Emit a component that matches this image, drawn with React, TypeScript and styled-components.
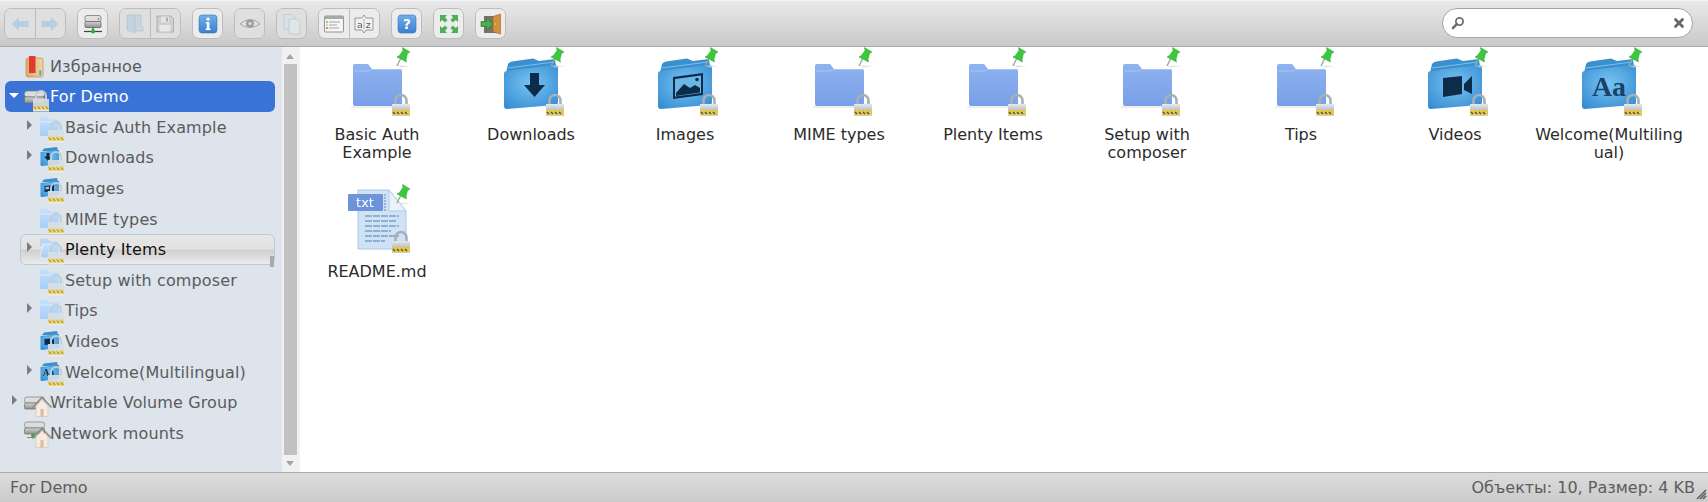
import React from "react";
import styled, { createGlobalStyle } from "styled-components";

const Global = createGlobalStyle`
  html, body { margin: 0; padding: 0; height: 100%; background: #fff; overflow: hidden; }
  #root { height: 100%; }
`;

const Shell = styled.div`
  display: flex;
  flex-direction: column;
  height: 502px;
  font-family: "DejaVu Sans", Verdana, sans-serif;
  font-size: 16px;
`;

const Toolbar = styled.div`
  box-sizing: border-box;
  height: 47px;
  flex: none;
  display: flex;
  align-items: flex-start;
  gap: 11px;
  padding: 7px 15px 0 4px;
  background: linear-gradient(#e9e9e9, #c9c9c9);
  border-top: 1px solid #f4f4f4;
  border-bottom: 1px solid #a9a9a9;
`;

const ButtonGroup = styled.div<{ $count: number }>`
  display: flex;
  width: ${(p) => p.$count * 31}px;
  height: 31px;
  box-sizing: border-box;
  border: 1px solid #bcbcbc;
  border-radius: 7px;
  overflow: hidden;
`;

const ToolButton = styled.div<{ $dim?: boolean }>`
  flex: 1;
  display: flex;
  align-items: center;
  justify-content: center;
  background: ${(p) => (p.$dim ? "#dfdfdf" : "#ececec")};
  & + & { border-left: 1px solid #bcbcbc; }
  svg { opacity: ${(p) => (p.$dim ? 0.42 : 1)}; filter: blur(0.4px); flex: none; }
`;

const Search = styled.div`
  margin-left: auto;
  box-sizing: border-box;
  width: 251px;
  height: 30px;
  background: #fff;
  border: 1px solid #a5a5a5;
  border-radius: 15px;
  display: flex;
  align-items: center;
  justify-content: space-between;
  padding: 0 7px;
  svg { filter: blur(0.3px); }
`;

const Main = styled.div`
  flex: 1;
  min-height: 0;
  display: flex;
`;

const Sidebar = styled.div`
  width: 282px;
  flex: none;
  box-sizing: border-box;
  padding-top: 3.4px;
  background: #dde4ec;
`;

const TreeRow = styled.div<{ $depth: number; $state?: "active" | "hover" }>`
  position: relative;
  box-sizing: border-box;
  height: 30.6px;
  margin: 0 7px 0 ${(p) => 5 + (p.$depth - 1) * 15}px;
  display: flex;
  align-items: center;
  border-radius: 6px;
  color: ${(p) => (p.$state === "active" ? "#fff" : p.$state === "hover" ? "#111" : "#5b5b5b")};
  background: ${(p) =>
    p.$state === "active"
      ? "#3a73d6"
      : p.$state === "hover"
        ? "linear-gradient(#e6e6e6 0%, #e2e2e2 48%, #cfcfcf 52%, #ebebeb 100%)"
        : "transparent"};
  border: ${(p) => (p.$state === "hover" ? "1px solid #b9cadb" : "none")};
  padding-left: ${(p) => (p.$state === "hover" ? 0 : 1)}px;
`;

const ArrowSlot = styled.div`
  width: 16px;
  flex: none;
  display: flex;
  justify-content: center;
`;

const RightTriangle = styled.div`
  width: 0;
  height: 0;
  margin-left: 1px;
  margin-top: -4px;
  border-left: 5px solid #7d7d7d;
  border-top: 5px solid transparent;
  border-bottom: 5px solid transparent;
`;

const DownTriangle = styled.div`
  width: 0;
  height: 0;
  margin-top: -1px;
  border-top: 5px solid #fff;
  border-left: 5px solid transparent;
  border-right: 5px solid transparent;
`;

const TreeIcon = styled.div`
  width: 28px;
  height: 30px;
  flex: none;
  svg { display: block; overflow: visible; filter: blur(0.35px); }
`;

const TreeLabel = styled.span`
  white-space: nowrap;
  margin-top: 1px;
  letter-spacing: 0.12px;
`;

const RowGrip = styled.div`
  position: absolute;
  right: 0;
  bottom: -3px;
  width: 4px;
  height: 11px;
  background: #a9a9a9;
`;

const ScrollTrack = styled.div`
  position: relative;
  width: 18px;
  flex: none;
  background: #f1f1f1;
`;

const ScrollThumb = styled.div`
  position: absolute;
  left: 2px;
  top: 17px;
  width: 13px;
  height: 391px;
  background: #c1c1c1;
`;

const ScrollArrow = styled.div<{ $down?: boolean }>`
  position: absolute;
  left: 4px;
  ${(p) => (p.$down ? "bottom: 6px;" : "top: 7px;")}
  width: 0;
  height: 0;
  border-left: 4px solid transparent;
  border-right: 4px solid transparent;
  ${(p) => (p.$down ? "border-top: 5px solid #a3a3a3;" : "border-bottom: 5px solid #a3a3a3;")}
`;

const Files = styled.div`
  flex: 1;
  min-width: 0;
  background: #fff;
  display: flex;
  flex-wrap: wrap;
  align-content: flex-start;
`;

const Tile = styled.div`
  width: 154px;
  height: 137px;
  display: flex;
  flex-direction: column;
  align-items: center;
  svg { display: block; flex: none; filter: blur(0.25px); }
`;

const TileLabel = styled.div`
  margin-top: 9px;
  width: 150px;
  text-align: center;
  line-height: 18px;
  color: #2b2b2b;
  overflow-wrap: anywhere;
`;

const StatusBar = styled.div`
  position: relative;
  box-sizing: border-box;
  height: 30px;
  flex: none;
  display: flex;
  align-items: center;
  justify-content: space-between;
  padding: 0 13px 0 10px;
  color: #5d5d5d;
  background: linear-gradient(#dcdcdc, #cbcbcb);
  border-top: 1px solid #a9a9a9;
`;

const Resizer = styled.div`
  position: absolute;
  right: 1px;
  bottom: 2px;
  svg { display: block; }
`;

const Defs = () => (
  <svg width="0" height="0" style={{ position: "absolute" }}>
    <defs>
      <linearGradient id="plain" x1="0" y1="0" x2="0" y2="1">
        <stop offset="0" stopColor="#8fb3ef" />
        <stop offset="1" stopColor="#789fe8" />
      </linearGradient>
      <radialGradient id="blue" cx="0.5" cy="0.42" r="0.7">
        <stop offset="0" stopColor="#79c3f2" />
        <stop offset="1" stopColor="#358dd2" />
      </radialGradient>
      <linearGradient id="silver" x1="0" y1="0" x2="0" y2="1">
        <stop offset="0" stopColor="#e6eaec" />
        <stop offset="1" stopColor="#b5bbbf" />
      </linearGradient>
      <linearGradient id="pale" x1="0" y1="0" x2="0" y2="1">
        <stop offset="0" stopColor="#c6e0fb" />
        <stop offset="1" stopColor="#a6cef6" />
      </linearGradient>
      <linearGradient id="btnblue" x1="0" y1="0" x2="0" y2="1">
        <stop offset="0" stopColor="#75aee8" />
        <stop offset="1" stopColor="#3b7fd3" />
      </linearGradient>
      <linearGradient id="drive" x1="0" y1="0" x2="0" y2="1">
        <stop offset="0" stopColor="#d5d5d5" />
        <stop offset="1" stopColor="#8f8f8f" />
      </linearGradient>
      <linearGradient id="fav" x1="0" y1="0" x2="1" y2="0">
        <stop offset="0" stopColor="#d9ad66" />
        <stop offset="1" stopColor="#f0d79f" />
      </linearGradient>
    </defs>
  </svg>
);

/* ---------- shared parts, in the 72×70 tile space ---------- */
const Lock = () => (
  <g>
    <path d="M54.5 58 V53.5 a5.5 5.5 0 0 1 11 0 V58" fill="none" stroke="#a9afb3" strokeWidth="2.6" />
    <rect x="51" y="57" width="18" height="7" fill="url(#silver)" />
    <rect x="51" y="63" width="18" height="5" fill="#e6c94a" />
    <path d="M52 65 l2 2 M56 65 l2 2 M60 65 l2 2 M64 65 l2 2" stroke="#5b5330" strokeWidth="1.4" />
    <rect x="51" y="68" width="18" height="1" fill="#cfcfcf" />
  </g>
);

const Pin = () => (
  <g transform="translate(-1.5 0)">
    <path d="M57 18.5 L72 19 L62 20.5Z" fill="#d8d8d8" opacity="0.7" />
    <path d="M57.5 19 L61 12" stroke="#8fb08f" strokeWidth="1.4" />
    <path d="M63 0.5 L70.5 5 L68 6.5 L66.5 12.5 L67 15 L57.5 10 L60 8.5 L63.5 3.5Z" fill="#3cc83c" stroke="#2ba12b" strokeWidth="0.5" />
  </g>
);

const PlainFolderShape = () => (
  <g>
    <path d="M14 17 H27 L31 22 H59 Q61 22 61 24 V57 Q61 59 59 59 H14 Q12 59 12 57 V19 Q12 17 14 17Z" fill="url(#plain)" />
    <path d="M13 24 H27 L31 22.5 H60.5" fill="none" stroke="#a9c4f3" strokeWidth="1" />
    <path d="M10 60 H63" stroke="#dcdcdc" strokeWidth="1" />
  </g>
);

const BlueFolderShape = () => (
  <g>
    <path d="M11 26 L13 17 Q14 15 17 14.5 L38 11.5 L44 14 L60 12 L61 20Z" fill="#3a8fcd" />
    <path d="M13 21 L59 15" stroke="#7fc0ec" strokeWidth="1" />
    <path d="M9 27 Q9 24 12 24 L26 22 L60 18 Q63 18 63 21 V55 Q63 58 60 58 L12 62 Q9 62 9 59Z" fill="url(#blue)" />
  </g>
);

type Glyph = "down" | "image" | "video" | "text";

const FolderGlyph = ({ kind }: { kind: Glyph }) => {
  if (kind === "down") return <path d="M35 26 H44 V38 H50 L39.5 50 L29 38 H35Z" fill="#0d2c4a" />;
  if (kind === "image")
    return (
      <g>
        <path d="M24 30 L54 26 V48 L24 52Z" fill="#0d2c4a" />
        <path d="M26 32 L52 28.5 V46 L26 49.5Z" fill="#6ab6e6" />
        <path d="M27 46 L35 37 L41 41 L46 38 L51 41 V45.5 L27 49Z" fill="#0d2c4a" />
        <circle cx="48" cy="32.5" r="1.8" fill="#0d2c4a" />
      </g>
    );
  if (kind === "video")
    return (
      <g>
        <path d="M24 31 L43 29 V47 L24 50Z" fill="#0d2c4a" />
        <path d="M45 37 L53 29 V47 L45 43Z" fill="#0d2c4a" />
      </g>
    );
  return (
    <text x="36" y="49" textAnchor="middle" fontFamily="'Liberation Serif', serif" fontWeight="700" fontSize="28" fill="#1a4467">
      Aa
    </text>
  );
};

const TileIcon = ({ kind }: { kind: "plain" | "file" | Glyph }) => (
  <svg width="72" height="70" viewBox="0 0 72 70" overflow="visible">
    {kind === "plain" && <PlainFolderShape />}
    {kind === "file" && (
      <g>
        <path d="M17 6 H48 L65 27 V65 H17Z" fill="#cfe2f6" stroke="#a9c6e4" strokeWidth="1" />
        <path d="M48 6 V27 H65Z" fill="#e9f2fb" stroke="#b4cde6" strokeWidth="1" />
        <path d="M24 32 H58 M24 37 H56 M24 42 H58 M24 47 H50 M24 52 H58 M24 57 H44" stroke="#7fa0c2" strokeWidth="1.3" strokeDasharray="7 1" />
        <rect x="7" y="10" width="35" height="17" rx="1" fill="#6d94da" />
        <path d="M44 10 V27" stroke="#9db3d3" strokeWidth="2" strokeDasharray="2 1" />
        <text x="24" y="23" textAnchor="middle" fontFamily="'DejaVu Sans', sans-serif" fontSize="13" fill="#fff">
          txt
        </text>
      </g>
    )}
    {kind !== "plain" && kind !== "file" && (
      <g>
        <BlueFolderShape />
        <FolderGlyph kind={kind} />
      </g>
    )}
    <Pin />
    <Lock />
  </svg>
);

/* ---------- tree icons, 30×30 ---------- */
const SmallLock = () => (
  <g>
    <path d="M14 19 V15 a5 5 0 0 1 10 0 V19" fill="none" stroke="#c2ccd3" strokeWidth="2" />
    <rect x="11" y="18" width="16" height="7" fill="#d8dfe4" opacity="0.9" />
    <rect x="11" y="24.5" width="16" height="4.5" fill="#ebd675" />
    <path d="M12 25.5 l2 2.4 M16 25.5 l2 2.4 M20 25.5 l2 2.4 M24 25.5 l2 2.4" stroke="#7a7048" strokeWidth="1" />
    <rect x="11" y="29" width="16" height="1.5" fill="#ececec" />
  </g>
);

const PaleFolder = () => (
  <g>
    <path d="M3 6 Q3 4.5 4.5 4.5 H10 L13 7.5 H21 Q22 7.5 22 8.5 V23 Q22 24 21 24 H4 Q3 24 3 23Z" fill="url(#pale)" />
    <path d="M3 10 H22" stroke="#dcecfc" strokeWidth="1" />
  </g>
);

const PaleOpenFolder = () => (
  <g>
    <path d="M3 6 Q3 4.5 4.5 4.5 H10 L13 7.5 H21 V12 H3Z" fill="#b9d6f5" />
    <path d="M6 10 H24 L21 24 H3Z" fill="url(#pale)" stroke="#eef5fc" strokeWidth="0.7" />
  </g>
);

const BlueSmall = ({ glyph }: { glyph: Glyph }) => (
  <g>
    <path d="M5 9 L7 6.5 L20 5 L21 9Z" fill="#3a8fcd" />
    <path d="M3.5 10 L22 8 V22 L5 24 Q3.5 24 3.5 23Z" fill="url(#blue)" />
    {glyph === "down" && <path d="M9.5 11 H12.5 V14.5 H15 L11 19 L7 14.5 H9.5Z" fill="#0d2c4a" />}
    {glyph === "image" && (
      <g>
        <path d="M7.5 13 L17 12 V18 L7.5 19Z" fill="#0d2c4a" />
        <path d="M8.5 14 L12 13.5 V16 L8.5 16.5Z" fill="#8cc8f0" />
      </g>
    )}
    {glyph === "video" && (
      <g>
        <path d="M7.5 13 L13 12.5 V18.5 L7.5 19Z" fill="#0d2c4a" />
        <path d="M13.5 15 L17 12.5 V18.5 L13.5 16.5Z" fill="#0d2c4a" />
      </g>
    )}
    {glyph === "text" && (
      <text x="11.5" y="19" textAnchor="middle" fontFamily="'Liberation Serif', serif" fontWeight="700" fontSize="9.5" fill="#0d2c4a">
        Aa
      </text>
    )}
  </g>
);

const SmallDrive = ({ net }: { net?: boolean }) => (
  <g transform={net ? "translate(0 -6)" : undefined}>
    <rect x="2.5" y="10" width="20" height="6" rx="2.5" fill="#dddddd" stroke="#7c7c7c" strokeWidth="0.7" />
    <rect x="2.5" y="16" width="20" height="6" rx="1.2" fill="url(#drive)" stroke="#6d6d6d" strokeWidth="0.7" />
    {net && <path d="M5 25.5 H17" stroke="#888" strokeWidth="1" />}
    {net && <circle cx="11" cy="23.5" r="2" fill="#30b030" />}
  </g>
);

const House = () => (
  <g>
    <path d="M10.5 20.5 L20 10.5 L29.5 20.5" fill="none" stroke="#8e8a84" strokeWidth="1.6" />
    <path d="M14 19 L20 12.8 L26 19 V29.5 H14Z" fill="#f5ebe0" stroke="#d5c7b8" strokeWidth="0.7" />
    <rect x="18.5" y="22" width="3" height="7.5" fill="#d8bba6" />
  </g>
);

const FavIcon = () => (
  <g>
    <path d="M4 9 Q4 7 6 7 H19 Q21 7 21 9 V24 Q21 26 19 26 H6 Q4 26 4 24Z" fill="url(#fav)" stroke="#b5924f" strokeWidth="0.7" />
    <rect x="7" y="5" width="6.5" height="17" fill="#de3b33" />
    <path d="M18.3 19.5 V24.5" stroke="#5a9fd4" strokeWidth="2" />
  </g>
);

type TreeIconKind = "fav" | "drive" | "folder" | "open" | Glyph | "home" | "net";

const TreeGlyph = ({ kind }: { kind: TreeIconKind }) => (
  <svg width="30" height="30" viewBox="0 0 30 30">
    {kind === "fav" && <FavIcon />}
    {kind === "drive" && (
      <g>
        <SmallDrive />
        <SmallLock />
      </g>
    )}
    {kind === "folder" && (
      <g>
        <PaleFolder />
        <SmallLock />
      </g>
    )}
    {kind === "open" && (
      <g>
        <PaleOpenFolder />
        <SmallLock />
      </g>
    )}
    {(kind === "down" || kind === "image" || kind === "video" || kind === "text") && (
      <g>
        <BlueSmall glyph={kind} />
        <SmallLock />
      </g>
    )}
    {kind === "home" && (
      <g>
        <SmallDrive />
        <House />
      </g>
    )}
    {kind === "net" && (
      <g>
        <SmallDrive net />
        <House />
      </g>
    )}
  </svg>
);

/* ---------- toolbar icons, 22×22 ---------- */
type ToolKind =
  | "back" | "forward" | "drive" | "open" | "save" | "info" | "eye" | "copy" | "list" | "sort" | "help" | "full" | "exit";

const ToolIcon = ({ kind }: { kind: ToolKind }) => (
  <svg width="22" height="22" viewBox="0 0 22 22">
    {kind === "back" && <path d="M2.5 11 L10 4 V8 H19.5 V14 H10 V18Z" fill="#7bbde6" />}
    {kind === "forward" && <path d="M19.5 11 L12 4 V8 H2.5 V14 H12 V18Z" fill="#7bbde6" />}
    {kind === "drive" && (
      <g>
        <rect x="3" y="2.5" width="16" height="6" rx="2" fill="#e0e0e0" stroke="#777" strokeWidth="0.8" />
        <rect x="3" y="8.5" width="16" height="6" rx="1" fill="url(#drive)" stroke="#666" strokeWidth="0.8" />
        <circle cx="16.5" cy="6" r="0.9" fill="#3ac03a" />
        <path d="M2 18.5 H20" stroke="#444" strokeWidth="1.2" />
        <path d="M11 14.5 V17" stroke="#555" strokeWidth="1.4" />
        <circle cx="11" cy="18.5" r="2.1" fill="#1fb52f" />
      </g>
    )}
    {kind === "open" && (
      <g>
        <path d="M3 2 H11 V20 L3 17Z" fill="#9fc3dd" stroke="#6e9dbf" strokeWidth="0.7" />
        <path d="M11 2 H17 V12 L19 14 V18 H11Z" fill="#a9cbe2" stroke="#6e9dbf" strokeWidth="0.7" />
      </g>
    )}
    {kind === "save" && (
      <g>
        <path d="M3 3 H17 L19.5 5.5 V19 H3Z" fill="#b9b9b9" stroke="#666" strokeWidth="0.9" />
        <rect x="7" y="3.5" width="8" height="6" fill="#efefef" />
        <rect x="12" y="4.5" width="2" height="4" fill="#666" />
        <rect x="5.5" y="12" width="11" height="6.5" fill="#f5f5f5" />
      </g>
    )}
    {kind === "info" && (
      <g>
        <rect x="2" y="2" width="18" height="18" rx="3" fill="url(#btnblue)" stroke="#3a74bd" strokeWidth="0.6" />
        <circle cx="11" cy="6.2" r="1.6" fill="#fff" />
        <path d="M8.8 9 H12.4 V15.6 H13.6 V17 H8.6 V15.6 H9.8 V10.4 H8.8Z" fill="#fff" />
      </g>
    )}
    {kind === "eye" && (
      <g>
        <path d="M1 11 Q11 2 21 11 Q11 18 1 11Z" fill="#e8e8e8" stroke="#555" strokeWidth="1" />
        <circle cx="11" cy="10.5" r="4" fill="#444" />
        <circle cx="11" cy="10.5" r="1.6" fill="#ddd" />
      </g>
    )}
    {kind === "copy" && (
      <g>
        <path d="M3 1.5 H11 L14 4.5 V16 H3Z" fill="#d6e6f2" stroke="#89a9c2" strokeWidth="0.8" />
        <path d="M8 6 H16 L19 9 V21 H8Z" fill="#e2eef7" stroke="#89a9c2" strokeWidth="0.8" />
      </g>
    )}
    {kind === "list" && (
      <g>
        <rect x="1.5" y="3" width="19" height="16" rx="1" fill="#f5f5f5" stroke="#8b8b8b" strokeWidth="0.9" />
        <rect x="1.5" y="3" width="19" height="3" fill="#a9a9a9" />
        <circle cx="4" cy="9" r="0.9" fill="#5cb85c" />
        <circle cx="4" cy="12" r="0.9" fill="#e6c94a" />
        <circle cx="4" cy="15" r="0.9" fill="#d9534f" />
        <path d="M6 9 H17 M6 12 H14 M6 15 H16" stroke="#a5a5a5" strokeWidth="1" />
      </g>
    )}
    {kind === "sort" && (
      <g>
        <path d="M2 5 H9 L11 2 L13 5 H20 V17 H13 L11 20 L9 17 H2Z" fill="#f1f1f1" stroke="#8f8f8f" strokeWidth="0.9" />
        <text x="6.8" y="14.5" textAnchor="middle" fontFamily="'DejaVu Sans', sans-serif" fontSize="9.5" fill="#555">a</text>
        <text x="15.2" y="14.5" textAnchor="middle" fontFamily="'DejaVu Sans', sans-serif" fontSize="9.5" fill="#555">z</text>
        <path d="M11 6 V16" stroke="#999" strokeWidth="0.8" />
      </g>
    )}
    {kind === "help" && (
      <g>
        <rect x="2" y="2" width="18" height="18" rx="3" fill="url(#btnblue)" stroke="#3a74bd" strokeWidth="0.6" />
        <text x="11" y="16.2" textAnchor="middle" fontFamily="'DejaVu Sans', sans-serif" fontWeight="700" fontSize="14" fill="#fff">?</text>
      </g>
    )}
    {kind === "full" && (
      <g fill="#4faf58">
        <path d="M2 2 H9 L7 4.3 L9.5 7 L7 9.5 L4.3 7 L2 9Z" />
        <path d="M20 2 H13 L15 4.3 L12.5 7 L15 9.5 L17.7 7 L20 9Z" />
        <path d="M2 20 H9 L7 17.7 L9.5 15 L7 12.5 L4.3 15 L2 13Z" />
        <path d="M20 20 H13 L15 17.7 L12.5 15 L15 12.5 L17.7 15 L20 13Z" />
      </g>
    )}
    {kind === "exit" && (
      <g>
        <rect x="4" y="3" width="12" height="17" fill="#77736a" />
        <path d="M13 3.5 L20.5 1 V21 L13 19Z" fill="#d2913f" stroke="#9a6426" strokeWidth="0.6" />
        <circle cx="15" cy="11" r="0.8" fill="#f5d98b" />
        <path d="M1 8.5 H6.5 V5 L13 11 L6.5 17 V13.5 H1Z" fill="#4cae4f" stroke="#2e7d32" strokeWidth="0.7" />
      </g>
    )}
  </svg>
);

const toolGroups: { kind: ToolKind; dim?: boolean }[][] = [
  [{ kind: "back", dim: true }, { kind: "forward", dim: true }],
  [{ kind: "drive" }],
  [{ kind: "open", dim: true }, { kind: "save", dim: true }],
  [{ kind: "info" }],
  [{ kind: "eye", dim: true }],
  [{ kind: "copy", dim: true }],
  [{ kind: "list" }, { kind: "sort" }],
  [{ kind: "help" }],
  [{ kind: "full" }],
  [{ kind: "exit" }],
];

type Row = { label: string; depth: number; icon: TreeIconKind; arrow?: "right" | "down"; state?: "active" | "hover"; grip?: boolean };

const rows: Row[] = [
  { label: "Избранное", depth: 1, icon: "fav" },
  { label: "For Demo", depth: 1, icon: "drive", arrow: "down", state: "active" },
  { label: "Basic Auth Example", depth: 2, icon: "folder", arrow: "right" },
  { label: "Downloads", depth: 2, icon: "down", arrow: "right" },
  { label: "Images", depth: 2, icon: "image" },
  { label: "MIME types", depth: 2, icon: "folder" },
  { label: "Plenty Items", depth: 2, icon: "open", arrow: "right", state: "hover", grip: true },
  { label: "Setup with composer", depth: 2, icon: "folder" },
  { label: "Tips", depth: 2, icon: "folder", arrow: "right" },
  { label: "Videos", depth: 2, icon: "video" },
  { label: "Welcome(Multilingual)", depth: 2, icon: "text", arrow: "right" },
  { label: "Writable Volume Group", depth: 1, icon: "home", arrow: "right" },
  { label: "Network mounts", depth: 1, icon: "net" },
];

const tiles: { label: string; kind: "plain" | "file" | Glyph }[] = [
  { label: "Basic Auth Example", kind: "plain" },
  { label: "Downloads", kind: "down" },
  { label: "Images", kind: "image" },
  { label: "MIME types", kind: "plain" },
  { label: "Plenty Items", kind: "plain" },
  { label: "Setup with composer", kind: "plain" },
  { label: "Tips", kind: "plain" },
  { label: "Videos", kind: "video" },
  { label: "Welcome(Multilingual)", kind: "text" },
  { label: "README.md", kind: "file" },
];

export default function App() {
  return (
    <Shell>
      <Global />
      <Defs />
      <Toolbar>
        {toolGroups.map((group, i) => (
          <ButtonGroup key={i} $count={group.length}>
            {group.map((b) => (
              <ToolButton key={b.kind} $dim={b.dim}>
                <ToolIcon kind={b.kind} />
              </ToolButton>
            ))}
          </ButtonGroup>
        ))}
        <Search>
          <svg width="16" height="16" viewBox="0 0 16 16">
            <circle cx="9.5" cy="6.5" r="3.6" fill="#fff" stroke="#6f6f6f" strokeWidth="1.8" />
            <path d="M6.8 9.2 L3 13" stroke="#6f6f6f" strokeWidth="2.6" strokeLinecap="round" />
          </svg>
          <svg width="12" height="12" viewBox="0 0 12 12">
            <path d="M2.5 2.5 L9.5 9.5 M9.5 2.5 L2.5 9.5" stroke="#666" strokeWidth="2.8" strokeLinecap="round" />
          </svg>
        </Search>
      </Toolbar>
      <Main>
        <Sidebar>
          {rows.map((r) => (
            <TreeRow key={r.label} $depth={r.depth} $state={r.state}>
              <ArrowSlot>
                {r.arrow === "right" && <RightTriangle />}
                {r.arrow === "down" && <DownTriangle />}
              </ArrowSlot>
              <TreeIcon>
                <TreeGlyph kind={r.icon} />
              </TreeIcon>
              <TreeLabel>{r.label}</TreeLabel>
              {r.grip && <RowGrip />}
            </TreeRow>
          ))}
        </Sidebar>
        <ScrollTrack>
          <ScrollArrow />
          <ScrollThumb />
          <ScrollArrow $down />
        </ScrollTrack>
        <Files>
          {tiles.map((t) => (
            <Tile key={t.label}>
              <TileIcon kind={t.kind} />
              <TileLabel>{t.label}</TileLabel>
            </Tile>
          ))}
        </Files>
      </Main>
      <StatusBar>
        <span>For Demo</span>
        <span>Объекты: 10, Размер: 4 KB</span>
        <Resizer>
          <svg width="12" height="12" viewBox="0 0 12 12">
            <path d="M11 2 L2 11 M11 5 L5 11 M11 8 L8 11" stroke="#555" strokeWidth="1.4" />
          </svg>
        </Resizer>
      </StatusBar>
    </Shell>
  );
}
